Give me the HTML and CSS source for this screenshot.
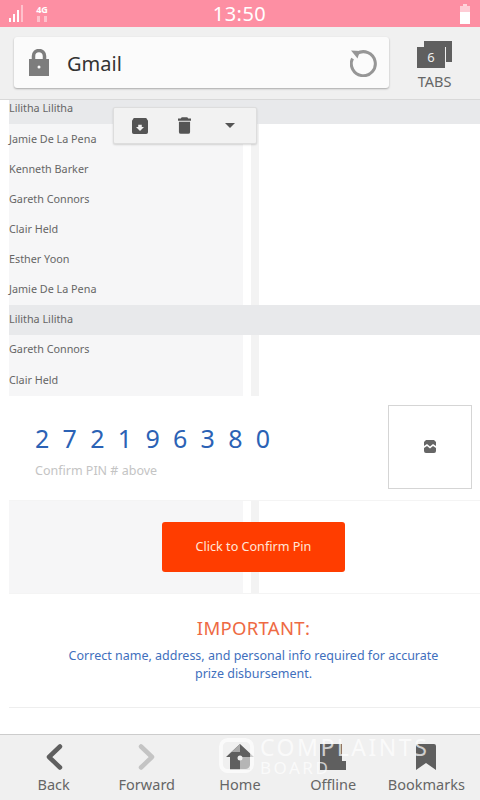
FILE: index.html
```html
<!DOCTYPE html>
<html lang="en">
<head>
    <meta charset="UTF-8">
    <meta name="viewport" content="width=device-width, initial-scale=1.0">
    <title>Gmail</title>
    <link rel="stylesheet" href="styles.css">
</head>
<body>
    <div class="status-bar">
        <div class="status-left">
            <svg class="signal" width="16" height="19" viewBox="0 0 16 19">
                <rect x="0" y="14" width="2" height="4" fill="#fff"/>
                <rect x="4" y="10" width="2" height="8" fill="#fff"/>
                <rect x="8" y="6" width="2" height="12" fill="#fff"/>
                <rect x="12" y="1" width="2" height="17" fill="#fff" opacity="0.45"/>
            </svg>
            <div class="net">
                <span class="net-label">4G</span>
                <svg width="12" height="6" viewBox="0 0 12 6">
                    <rect x="1" y="0" width="3" height="6" fill="#fff" opacity="0.45"/>
                    <rect x="8" y="0" width="3" height="6" fill="#fff" opacity="0.45"/>
                </svg>
            </div>
        </div>
        <div class="clock">13:50</div>
        <svg class="battery" width="10" height="20" viewBox="0 0 10 20">
            <rect x="3" y="0" width="4" height="2" fill="#fff" opacity="0.6"/>
            <rect x="0" y="2" width="10" height="6" fill="#fff" opacity="0.55"/>
            <rect x="0" y="8" width="10" height="12" fill="#fff"/>
        </svg>
    </div>

    <div class="toolbar">
        <div class="url-box">
            <svg class="lock" width="20" height="27" viewBox="0 0 20 27">
                <path d="M4.500 11V7a5.500 5.500 0 0 1 11 0v4" fill="none" stroke="#7d7d7d" stroke-width="3.500"/>
                <path fill-rule="evenodd" d="M0 10h20v17H0z M10 16.500a1.500 1.500 0 1 0 0 3a1.500 1.500 0 0 0 0-3z" fill="#7d7d7d"/>
            </svg>
            <span class="url-text">Gmail</span>
            <svg class="reload" width="28" height="28" viewBox="0 0 28 28">
                <path d="M7 4.500a12 12 0 1 1-4.500 5" fill="none" stroke="#969696" stroke-width="3"/>
                <path d="M1 1.500l9 .5-2.500 7.500z" fill="#969696"/>
            </svg>
        </div>
        <div class="tabs-btn">
            <svg width="35" height="27" viewBox="0 0 35 27">
                <path d="M7 0h28v21h-6V6H7z" fill="#5f5f5f"/>
                <rect x="0" y="6" width="28" height="21" fill="#5f5f5f"/>
                <text x="14" y="21" class="tabs-count">6</text>
            </svg>
            <span class="tabs-label">TABS</span>
        </div>
    </div>

    <div class="page">
        <div class="mail-list">
            <div class="row row-active first"><span class="name">Lilitha Lilitha</span></div>
            <div class="row"><span class="name">Jamie De La Pena</span><span class="gutter"></span><span class="bar"></span></div>
            <div class="row"><span class="name">Kenneth Barker</span><span class="gutter"></span><span class="bar"></span></div>
            <div class="row"><span class="name">Gareth Connors</span><span class="gutter"></span><span class="bar"></span></div>
            <div class="row"><span class="name">Clair Held</span><span class="gutter"></span><span class="bar"></span></div>
            <div class="row"><span class="name">Esther Yoon</span><span class="gutter"></span><span class="bar"></span></div>
            <div class="row"><span class="name">Jamie De La Pena</span><span class="gutter"></span><span class="bar"></span></div>
            <div class="row row-active"><span class="name">Lilitha Lilitha</span></div>
            <div class="row"><span class="name">Gareth Connors</span><span class="gutter"></span><span class="bar"></span></div>
            <div class="row last"><span class="name">Clair Held</span><span class="gutter"></span><span class="bar"></span></div>
        </div>

        <div class="mail-actions">
            <svg width="16" height="16" viewBox="0 0 18 18">
                <path fill-rule="evenodd" d="M2 0h14l2 3v13a2 2 0 0 1-2 2H2a2 2 0 0 1-2-2V3z M9 14.500l4.500-4.500H11V7.500H7V10H4.500z" fill="#555"/>
            </svg>
            <svg class="trash" width="13" height="17" viewBox="0 0 14 18">
                <path d="M4 0h6l1 1.500h3v2.500H0V1.500h3z M1 5h12v11a2 2 0 0 1-2 2H3a2 2 0 0 1-2-2z" fill="#555"/>
            </svg>
            <svg width="10" height="5" viewBox="0 0 10 5">
                <path d="M0 0h10L5 5z" fill="#555"/>
            </svg>
        </div>

        <div class="pin-section">
            <div class="pin-text">
                <div class="pin-number">2 7 2 1 9 6 3 8 0</div>
                <div class="pin-hint">Confirm PIN # above</div>
            </div>
            <div class="pin-image">
                <svg width="12" height="13" viewBox="0 0 12 13">
                    <path d="M2 0h8l2 2v4L9 4 6 6.500 3 4 0 6V2z M0 8l3-2 3 2.500L9 6l3 2v3a2 2 0 0 1-2 2H2a2 2 0 0 1-2-2z" fill="#666"/>
                </svg>
            </div>
        </div>

        <div class="confirm-section">
            <span class="name-panel"></span><span class="gutter"></span><span class="bar"></span>
            <button class="confirm-btn">Click to Confirm Pin</button>
        </div>

        <div class="notice">
            <h2>IMPORTANT:</h2>
            <p>Correct name, address, and personal info required for accurate prize disbursement.</p>
        </div>

        <div class="page-end"></div>
    </div>

    <div class="bottom-nav">
        <div class="nav-item">
            <svg width="18" height="26" viewBox="0 0 18 26">
                <path d="M15 2.500L4 13l11 10.500" fill="none" stroke="#5f5f5f" stroke-width="4.500" stroke-linecap="round" stroke-linejoin="round"/>
            </svg>
            <span>Back</span>
        </div>
        <div class="nav-item">
            <svg width="18" height="26" viewBox="0 0 18 26">
                <path d="M3 2.500L14 13 3 23.500" fill="none" stroke="#c4c4c4" stroke-width="4.500" stroke-linecap="round" stroke-linejoin="round"/>
            </svg>
            <span>Forward</span>
        </div>
        <div class="nav-item">
            <svg width="28" height="26" viewBox="0 0 28 26">
                <path d="M14 0L0 13h4v13h10V13z" fill="#5f5f5f"/>
                <path d="M14 0l14 13h-4v13H14V13z" fill="#5f5f5f"/>
                <path d="M14 13h10v13H14z" fill="#b5b5b5"/>
                <path d="M0 13L14 0v8H5z" fill="#a8a8a8"/>
                <circle cx="14" cy="14" r="2.500" fill="#f0f0f0"/>
            </svg>
            <span>Home</span>
        </div>
        <div class="nav-item">
            <svg width="26" height="26" viewBox="0 0 26 26">
                <path d="M0 0h22v17h4v9H0z" fill="#5f5f5f"/>
            </svg>
            <span>Offline</span>
        </div>
        <div class="nav-item">
            <svg width="20" height="26" viewBox="0 0 20 26">
                <path d="M2 0h16a2 2 0 0 1 2 2v24l-10-7-10 7V2a2 2 0 0 1 2-2z" fill="#5f5f5f"/>
            </svg>
            <span>Bookmarks</span>
        </div>
        <div class="watermark">
            <svg width="35" height="35" viewBox="0 0 36 36">
                <rect x="2" y="2" width="32" height="32" rx="7" fill="none" stroke="#fff" stroke-width="4"/>
            </svg>
            <div class="watermark-text">
                <div class="wm-top">COMPLAINTS</div>
                <div class="wm-bottom">BOARD</div>
            </div>
        </div>
    </div>
</body>
</html>
```

FILE: styles.css
```css
* {
    box-sizing: border-box;
}
body {
    margin: 0;
    width: 480px;
    height: 800px;
    overflow: hidden;
    display: flex;
    flex-direction: column;
    font-family: "Noto Sans", Arial, sans-serif;
    background-color: #fff;
}

/* status bar */
.status-bar {
    height: 27px;
    flex: none;
    background-color: #fd8fa3;
    display: grid;
    grid-template-columns: 1fr auto 1fr;
    align-items: center;
    padding: 0 10px 0 9px;
}
.status-left {
    display: flex;
    align-items: center;
    gap: 11px;
}
.battery {
    justify-self: end;
}
.net {
    display: flex;
    flex-direction: column;
    align-items: center;
    line-height: 10px;
}
.net-label {
    color: #fff;
    font-size: 9px;
    font-weight: 700;
    height: 11px;
}
.clock {
    color: #fff;
    font-size: 20px;
    letter-spacing: 0.5px;
    line-height: 27px;
}

/* toolbar */
.toolbar {
    height: 73px;
    flex: none;
    background-color: #f0f0f0;
    border-bottom: 1px solid #d9d9d9;
    display: flex;
    padding: 10px 0 0 14px;
}
.url-box {
    width: 375px;
    height: 51px;
    background-color: #fbfbfb;
    border-radius: 3px;
    box-shadow: 0 1px 2px rgba(0, 0, 0, 0.3);
    display: flex;
    align-items: center;
    padding: 0 11px 0 15px;
}
.url-text {
    flex: 1;
    margin-left: 18px;
    font-size: 20px;
    line-height: 29px;
    padding-top: 2px;
    color: #333;
}
.tabs-btn {
    width: 91px;
    display: flex;
    flex-direction: column;
    align-items: center;
    padding-top: 4px;
    gap: 3px;
}
.tabs-count {
    fill: #eee;
    font-size: 13px;
    text-anchor: middle;
}
.tabs-label {
    font-size: 14.500px;
    color: #666;
    line-height: 20px;
}

/* page content */
.page {
    flex: 1;
    position: relative;
    padding-left: 9px;
    background-color: #fff;
    display: flex;
    flex-direction: column;
}
.row {
    height: 30.1px;
    display: flex;
}
.row.first {
    height: 24px;
}
.row.last {
    height: 31.2px;
}
.name {
    width: 234px;
    height: 100%;
    padding-bottom: 2px;
    background-color: #f6f6f7;
    font-size: 10.8px;
    color: #666;
    display: flex;
    align-items: center;
}
.first .name {
    align-items: flex-start;
    padding-bottom: 0;
}
.row-active {
    background-color: #e8e9eb;
}
.row-active .name {
    background-color: transparent;
}
.gutter {
    width: 8px;
    background-color: #fff;
}
.bar {
    width: 8px;
    background-color: #f3f3f3;
}

.mail-actions {
    position: absolute;
    left: 113px;
    top: 7px;
    width: 144px;
    height: 37px;
    background-color: #f2f2f2;
    border: 1px solid #ddd;
    border-radius: 2px;
    box-shadow: 0 1px 2px rgba(0, 0, 0, 0.15);
    display: flex;
    align-items: center;
    padding-left: 18px;
}
.trash {
    margin: 0 34px 0 30px;
}

.pin-section {
    height: 105px;
    flex: none;
    display: flex;
    justify-content: space-between;
    padding: 9px 8px 0 26px;
    border-bottom: 1px solid #f4f4f4;
}
.pin-text {
    padding-top: 17px;
}
.pin-number {
    font-size: 25px;
    line-height: 32px;
    letter-spacing: 3.4px;
    color: #2b62b5;
}
.pin-hint {
    font-size: 12.5px;
    color: #c4c4c4;
    margin-top: 8px;
}
.pin-image {
    width: 84px;
    height: 84px;
    border: 1px solid #d5d5d5;
    display: flex;
    align-items: center;
    justify-content: center;
}

.confirm-section {
    height: 92px;
    flex: none;
    display: flex;
    position: relative;
}
.name-panel {
    width: 234px;
    background-color: #f6f6f7;
}
.confirm-btn {
    position: absolute;
    left: 153px;
    top: 21px;
    width: 183px;
    height: 50px;
    border: none;
    border-radius: 3px;
    background-color: #ff3d00;
    color: #ffe6d9;
    font-family: inherit;
    font-size: 12.6px;
}

.notice {
    height: 115px;
    flex: none;
    border-top: 1px solid #f4f4f4;
    border-bottom: 1px solid #eee;
    text-align: center;
    padding: 21px 36px 0 54px;
}
.notice h2 {
    margin: 0;
    font-size: 18.5px;
    font-weight: 400;
    line-height: 26px;
    color: #ee6a43;
    letter-spacing: 0.3px;
}
.notice p {
    margin: 6px 0 0;
    font-size: 12.5px;
    line-height: 18px;
    color: #3f6fbd;
}
.page-end {
    flex: 1;
}

/* bottom nav */
.bottom-nav {
    height: 66px;
    flex: none;
    background-color: #f0f0f0;
    border-top: 1px solid #ccc;
    display: flex;
    padding: 9px 7px 0;
    position: relative;
}
.nav-item {
    width: 93.2px;
    display: flex;
    flex-direction: column;
    align-items: center;
    gap: 4px;
}
.nav-item span {
    font-size: 14.5px;
    line-height: 20px;
    color: #666;
}
.watermark {
    position: absolute;
    left: 219px;
    top: 1px;
    display: flex;
    align-items: flex-start;
    gap: 6px;
    opacity: 0.7;
    pointer-events: none;
}
.watermark svg {
    margin-top: 2px;
}
.watermark-text {
    color: #fff;
}
.wm-top {
    font-size: 23px;
    line-height: 23px;
    letter-spacing: 2.5px;
}
.wm-bottom {
    font-size: 17px;
    line-height: 17px;
    letter-spacing: 2.5px;
}
```
